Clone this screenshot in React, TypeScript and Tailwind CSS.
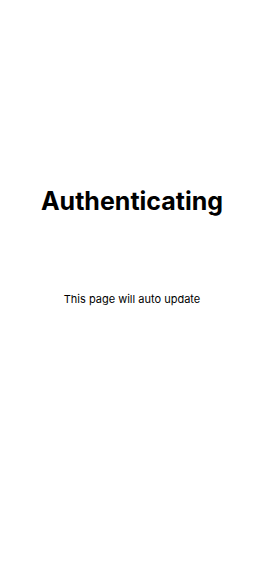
export default function App() {
  return (
    <div
      className="flex h-screen w-full flex-col items-center bg-white text-black"
      style={{ fontFamily: 'Inter, "Liberation Sans", sans-serif' }}
    >
      <h1 className="mt-[186px] text-[25px] font-bold leading-[30px]">Authenticating</h1>
      <p className="mt-[75px] text-[11px] leading-4">This page will auto update</p>
    </div>
  )
}
